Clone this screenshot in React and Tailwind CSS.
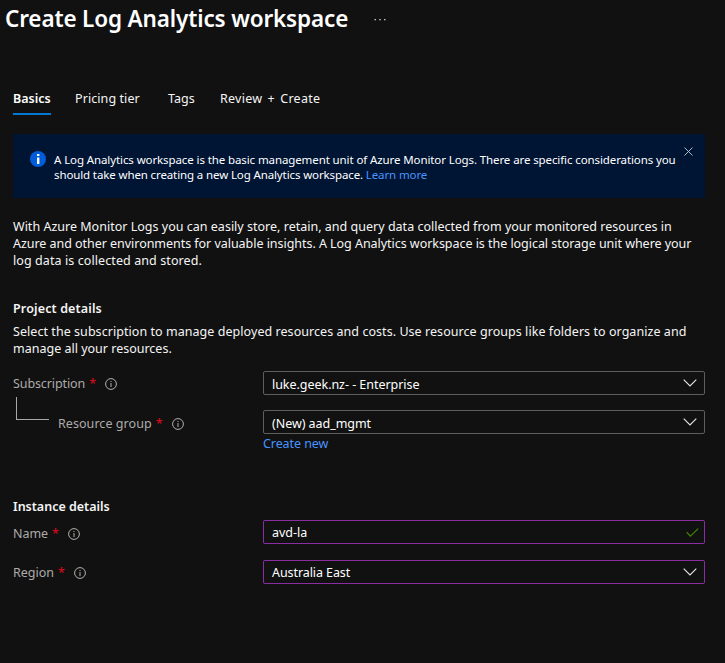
import React from 'react';

function InfoIcon() {
  return (
    <svg className="h-3 w-3 shrink-0" viewBox="0 0 12 12" fill="none" stroke="#b3b0ad">
      <circle cx="6" cy="6" r="5.4" />
      <path d="M6 5v4M6 3v1" />
    </svg>
  );
}

function Label({ children, className }) {
  return (
    <div className={'flex h-[17px] items-center whitespace-nowrap text-[#adabaa] ' + className}>
      <span>{children}</span>
      <span className="ml-1 text-[#e00b1c]">*</span>
      <span className="ml-[9px]"><InfoIcon /></span>
    </div>
  );
}

function Chevron() {
  return (
    <svg className="-mr-px h-[8px] w-[14px]" viewBox="0 0 14 8" fill="none" stroke="#e8e8e8" strokeWidth="1.1">
      <path d="M.7.7 7 7 13.3.7" />
    </svg>
  );
}

function Field({ children, border, icon, text = '' }) {
  return (
    <div className={'flex h-6 w-[442px] items-center justify-between rounded-[2px] border pr-2 pl-2 whitespace-nowrap text-white ' + border}>
      <span className={'leading-[17px] ' + text}>{children}</span>
      {icon}
    </div>
  );
}

export default function App() {
  return (
    <div className="flex h-[663px] w-[725px] flex-col overflow-hidden bg-[#111111] font-['Noto_Sans','Open_Sans',sans-serif] text-[12.5px] leading-[17px] text-[#f5f5f5]">
      <header className="flex h-[38px] items-center pl-[5px]">
        <h1 className="text-[22.5px] leading-[38px] font-semibold whitespace-nowrap text-white">
          <span className="tracking-[-0.15px]">Create Log Analytics workspace</span>
        </h1>
        <svg className="ml-[26px] h-[3px] w-3" viewBox="0 0 12 3" fill="#c8c8c8">
          <path d="M.5 1h1.5v1.3H.5zM5.2 1h1.5v1.3H5.2zM10 1h1.5v1.3H10z" />
        </svg>
      </header>
      <nav className="mt-[52px] flex h-[25px] pl-[13px] whitespace-nowrap">
        <span className="w-[38px] border-b-2 border-[#0078d4] font-semibold text-white"><span>Basics</span></span>
        <span className="ml-6 w-[65px] tracking-[0.08px]"><span>Pricing tier</span></span>
        <span className="ml-7 w-[26px]"><span>Tags</span></span>
        <span className="ml-[26px] tracking-[0.25px] [word-spacing:1.8px]"><span>Review + Create</span></span>
      </nav>
      <section className="mt-[19px] ml-[13px] flex h-16 w-[692px] bg-[#001433] text-[11.5px] leading-[15px] whitespace-nowrap text-white">
        <svg className="mt-[17px] ml-[17px] h-4 w-4" viewBox="0 0 16 16">
          <circle cx="8" cy="8" r="8" fill="#015cda" />
          <path d="M7 3h2.4v2H7zM7 6.5h2.4V13H7z" fill="#fff" />
        </svg>
        <div className="mt-[18px] ml-2 w-[621px]">
          <div className="tracking-[-0.102px]"><span>A Log Analytics workspace is the basic management unit of Azure Monitor Logs. There are specific considerations you</span></div>
          <div className="tracking-[-0.12px]"><span>should take when creating a new Log Analytics workspace. <a className="text-[#4894fe]">Learn more</a></span></div>
        </div>
        <svg className="mt-[13px] ml-[9px] h-[9px] w-[9px]" viewBox="0 0 9 9" stroke="#c5cad2" fill="none" strokeWidth=".9">
          <path d="m.5.5 8 8m0-8-8 8" />
        </svg>
      </section>
      <div className="mt-5 pl-[13px] whitespace-nowrap">
        <div className="tracking-[0.012px]"><span>With Azure Monitor Logs you can easily store, retain, and query data collected from your monitored resources in</span></div>
        <div className="tracking-[-0.04px]"><span>Azure and other environments for valuable insights. A Log Analytics workspace is the logical storage unit where your</span></div>
        <div className="tracking-[0.09px]"><span>log data is collected and stored.</span></div>
      </div>
      <h2 className="mt-[31px] pl-[13px] font-semibold tracking-[0.14px]"><span>Project details</span></h2>
      <div className="mt-[6px] pl-[13px] whitespace-nowrap">
        <div className="tracking-[0.052px]"><span>Select the subscription to manage deployed resources and costs. Use resource groups like folders to organize and</span></div>
        <div><span>manage all your resources.</span></div>
      </div>
      <div className="mt-[14px] flex h-[39px] pl-[13px]">
        <div className="w-[250px] pt-1">
          <Label className="tracking-[-0.1px]">Subscription</Label>
          <div className="mt-[5px] ml-[3px] h-[13px] w-px bg-[#a8a8a8]" />
        </div>
        <Field border="border-[#5f5e5d]" text="pt-[2px] tracking-[-0.04px]" icon={<Chevron />}>luke.geek.nz- - Enterprise</Field>
      </div>
      <div className="flex h-[88px] pl-[13px]">
        <div className="flex w-[250px]">
          <div className="ml-[3px] h-[10px] w-[33px] border-b border-l border-[#a8a8a8]" />
          <Label className="mt-[5px] ml-[9px] tracking-[0.06px]">Resource group</Label>
        </div>
        <div>
          <Field border="border-[#5f5e5d]" text="pt-[2px] tracking-[-0.05px]" icon={<Chevron />}>(New) aad_mgmt</Field>
          <div className="mt-px tracking-[-0.08px] text-[#4894fe]"><span>Create new</span></div>
        </div>
      </div>
      <h2 className="pl-[13px] font-semibold"><span>Instance details</span></h2>
      <div className="mt-[5px] flex h-10 pl-[13px]">
        <div className="w-[250px] pt-[5px]"><Label className="tracking-[-0.05px]">Name</Label></div>
        <Field border="border-[#8a2da5]" icon={
          <svg className="-mr-[3px] h-[9px] w-[13px]" viewBox="0 0 13 9" fill="none" stroke="#428000" strokeWidth="1.3"><path d="m.7 4.3 3.7 3.8L12.2.6" /></svg>
        }>avd-la</Field>
      </div>
      <div className="flex h-10 pl-[13px]">
        <div className="w-[250px] pt-1"><Label className="">Region</Label></div>
        <Field border="border-[#8a2da5]" text="tracking-[-0.08px]" icon={<Chevron />}>Australia East</Field>
      </div>
    </div>
  );
}
